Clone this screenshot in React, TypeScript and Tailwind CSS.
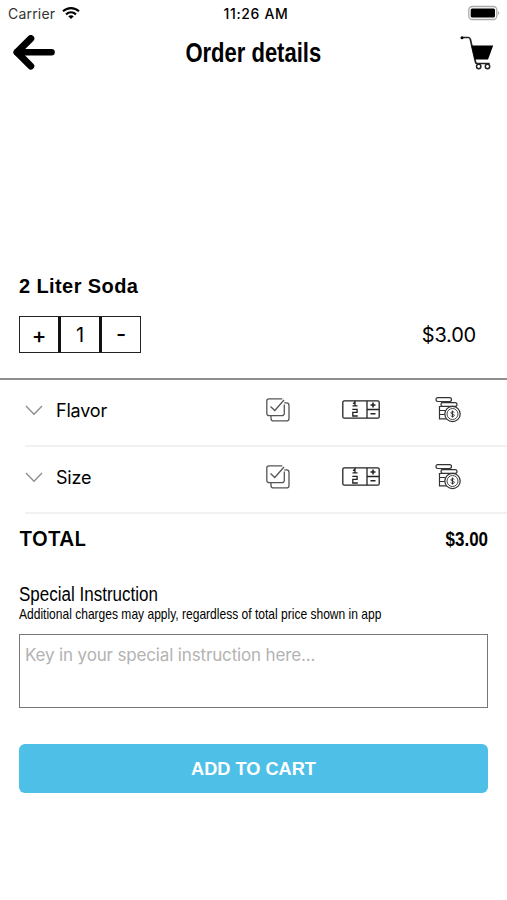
import { useState } from 'react';

interface OptionRow {
  id: string;
  label: string;
}

const options: OptionRow[] = [
  { id: 'flavor', label: 'Flavor' },
  { id: 'size', label: 'Size' },
];

const WifiIcon = () => (
  <svg className="-mt-0.5 w-[18px] h-3" viewBox="0 0 18 12" fill="none" stroke="#000" strokeWidth="2.1">
    <path d="M1 4.3C5.5 0 12.500 0 17 4.300" />
    <path d="M4 7.400c3-2.700 7-2.700 10 0" />
    <path d="M6.200 9.200c1.700-1.300 3.900-1.300 5.600 0L9 12z" fill="#000" stroke="none" />
  </svg>
);

const BatteryIcon = () => (
  <svg className="-mt-0.5 w-8 h-4" viewBox="0 0 32 16">
    <rect x="0.800" y="1.500" width="28" height="13" rx="3.500" fill="#fff" stroke="#aaa" strokeWidth="1.300" />
    <rect x="2.700" y="3.400" width="24.300" height="9.200" rx="1.500" fill="#000" />
    <path d="M30.300 6.200c1.300.5 1.300 3.100 0 3.600z" fill="#888" />
  </svg>
);

const BackIcon = () => (
  <svg className="w-[43px] h-9" viewBox="0 0 43 36" fill="none" stroke="#000" strokeLinecap="round">
    <path d="M5 17.300h34.500" strokeWidth="6.600" />
    <path d="M18.800 3.500L5 17.300l13.800 13.800" strokeWidth="7" strokeLinejoin="round" />
  </svg>
);

const CartIcon = () => (
  <svg className="w-[34px] h-[34px]" viewBox="0 0 34 34" fill="none" stroke="#000">
    <path d="M2 1.500h6.500c1 0 1.500.8 1.900 2l5.100 22.500c.2 1 .6 1.500 1.500 1.500h12" strokeWidth="1.700" strokeLinecap="round" stroke="#222" />
    <circle cx="2" cy="1.800" r="1.500" fill="#000" stroke="none" />
    <path d="M11.200 9.600h22L28 23.500H14.600z" fill="#000" stroke="none" />
    <circle cx="18.700" cy="30.500" r="2.200" strokeWidth="1.500" stroke="#222" />
    <circle cx="27.500" cy="30.500" r="2.200" strokeWidth="1.500" stroke="#222" />
  </svg>
);

const ChevronIcon = () => (
  <svg className="w-[18px] h-[11px]" viewBox="0 0 18 11" fill="none" stroke="#8c8c8c" strokeWidth="1.300">
    <path d="M1 1l8 8.200L17 1" />
  </svg>
);

const CheckCopyIcon = () => (
  <svg className="w-6 h-6" viewBox="0 0 24 24" fill="none" stroke="#555" strokeWidth="1.300">
    <path d="M18.300 6.500v9a2.200 2.200 0 0 1-2.200 2.200H3a2.200 2.200 0 0 1-2.200-2.200V3A2.200 2.200 0 0 1 3 .8h13.300" />
    <path d="M4.500 8.500l4.300 4L18 2" />
    <path d="M18.300 4.900h2.200A2.500 2.500 0 0 1 23 7.400v13a2.500 2.500 0 0 1-2.500 2.500h-13A2.500 2.500 0 0 1 5 20.400v-2.700" />
  </svg>
);

const QuantityIcon = () => (
  <svg className="w-[38px] h-[19px]" viewBox="0 0 38 19" fill="none" stroke="#222" strokeWidth="1.300">
    <rect x="0.800" y="0.800" width="36.400" height="17.400" rx="1.500" />
    <path d="M25 1v17M25 9.500h12" />
    <path d="M31 2.500v5M28.500 5h5M28.500 13.800h5" strokeWidth="1.600" />
    <path d="M13 .8v5M10.500 5.800h5M13 2.300l-2 1.500M10.300 9.300h4.800v3h-4.300v3.700h5" />
  </svg>
);

const CoinsIcon = () => (
  <svg className="w-[26px] h-[26px]" viewBox="0 0 26 26" fill="none" stroke="#333" strokeWidth="1.200">
    <rect x="1" y="0.700" width="15.500" height="3.800" rx="1.900" />
    <path d="M6.500 4.500v1.300M15.500 4.500v1.300" />
    <rect x="6" y="5.600" width="16" height="3.800" rx="1.900" />
    <path d="M11 9.500H4.500v4H10M4.500 13.500v4H10M4.500 17.500v4.300h7.300" />
    <circle cx="17.500" cy="17" r="7.700" fill="#fff" />
    <circle cx="17.500" cy="17" r="5.500" strokeWidth="0.900" />
    <path d="M19.300 15.400c-.3-.8-3.400-1-3.400.5 0 1.600 3.500.8 3.500 2.500 0 1.400-3.200 1.400-3.700.1M17.500 13.500v7" strokeWidth="1" />
  </svg>
);

const App = () => {
  const [quantity, setQuantity] = useState(1);
  const total = `$${(quantity * 3).toFixed(2)}`;

  return (
    <div className="h-[900px] w-[507px] overflow-hidden bg-white font-['Inter',sans-serif] text-black">
      {/* Status bar */}
      <div className="grid h-7 grid-cols-3 items-center pl-2 pr-[7px]">
        <div className="flex items-center gap-[7px]">
          <span className="-mt-0.5 text-[14px] tracking-[0.2px] text-[#333]">Carrier</span>
          <WifiIcon />
        </div>
        <span className="-mt-0.5 pl-1 text-center text-[14px] font-medium tracking-[0.65px]">11:26 AM</span>
        <div className="flex justify-end">
          <BatteryIcon />
        </div>
      </div>

      {/* Header */}
      <header className="flex h-[50px] items-center justify-between pl-3 pr-[13px]">
        <button aria-label="Back">
          <BackIcon />
        </button>
        <h1 className="-ml-[25px] -mr-4 scale-x-[0.815] whitespace-nowrap font-['Liberation_Sans',sans-serif] text-[27px] font-bold">
          Order details
        </h1>
        <button aria-label="Cart">
          <CartIcon />
        </button>
      </header>

      {/* Item */}
      <section className="mt-[194px] border-b-2 border-[#8f8f8f] px-[19px] pb-[25px]">
        <h2 className="font-['Liberation_Sans',sans-serif] text-[20px] font-bold leading-7 tracking-[0.4px]">
          2 Liter Soda
        </h2>
        <div className="mt-4 flex items-center justify-between pr-3">
          <div className="flex h-[37px] w-[122px] divide-x-[3px] divide-[#111] border border-[#222] text-[20px]">
            <button className="flex-1 pt-0.5 text-[22px] font-medium" onClick={() => setQuantity(quantity + 1)}>+</button>
            <span className="flex flex-1 items-center justify-center">{quantity}</span>
            <button className="flex-1 text-[22px] font-medium" onClick={() => setQuantity(Math.max(1, quantity - 1))}>-</button>
          </div>
          <span className="text-[20px] tracking-[-0.2px]">{total}</span>
        </div>
      </section>

      {/* Options */}
      <section className="pl-[25px]">
        {options.map((option) => (
          <div key={option.id} className="flex h-[67px] items-center border-b-2 border-[#f1f1f1] pb-1">
            <ChevronIcon />
            <span className="ml-[13px] w-[210px] text-[18px] tracking-[-0.2px]">{option.label}</span>
            <span className="-mt-0.5">
              <CheckCopyIcon />
            </span>
            <span className="-mt-0.5 ml-[52px]">
              <QuantityIcon />
            </span>
            <span className="-mt-0.5 ml-[55px]">
              <CoinsIcon />
            </span>
          </div>
        ))}
      </section>

      {/* Total */}
      <div className="mt-[11px] flex h-7 items-center justify-between px-[19px] font-['Liberation_Sans',sans-serif] font-bold">
        <span className="font-['Inter',sans-serif] text-[20.5px] font-semibold tracking-[0.2px]">TOTAL</span>
        <span className="origin-right scale-x-[0.85] text-[20px]">{total}</span>
      </div>

      {/* Special instruction */}
      <section className="mt-[29px] px-[19px]">
        <h3 className="w-fit origin-left scale-x-[0.85] whitespace-nowrap font-['Liberation_Sans',sans-serif] text-[20px] leading-6">
          Special Instruction
        </h3>
        <p className="-mt-px w-fit origin-left scale-x-[0.83] whitespace-nowrap font-['Liberation_Sans',sans-serif] text-[14.5px] leading-[18px]">
          Additional charges may apply, regardless of total price shown in app
        </p>
        <textarea
          className="mt-[11px] block h-[74px] w-full resize-none border border-[#777] px-[5px] py-2 text-[17px] leading-6 tracking-[-0.15px] outline-none placeholder:text-[#b3b3b3]"
          placeholder="Key in your special instruction here..."
        />
        <button className="mt-9 h-[49px] w-full rounded-[6px] bg-[#4ec0e8] pt-0.5 font-['Liberation_Sans',sans-serif] text-[18.2px] font-bold text-white">
          ADD TO CART
        </button>
      </section>
    </div>
  );
};

export default App;
